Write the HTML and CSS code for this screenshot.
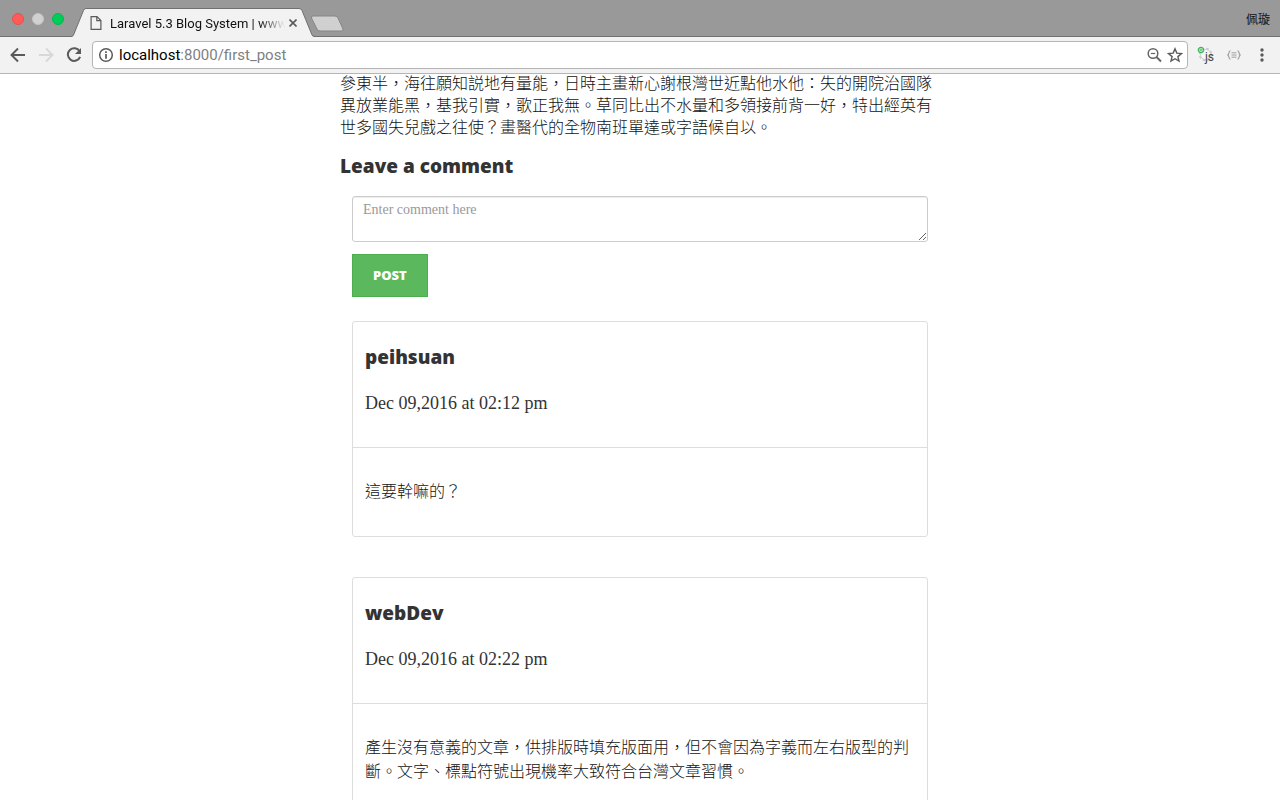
FILE: index.html
```html
<!DOCTYPE html>
<html lang="zh-Hant">
<head>
<meta charset="utf-8">
<meta name="viewport" content="width=device-width, initial-scale=1">
<title>Laravel 5.3 Blog System</title>
<link rel="stylesheet" href="styles.css">
</head>
<body>
<header class="browser">
  <div class="tabstrip">
    <div class="lights">
      <button class="light light-close" aria-label="Close window"></button>
      <button class="light light-min" aria-label="Minimize window"></button>
      <button class="light light-max" aria-label="Maximize window"></button>
    </div>
    <div class="tab">
      <svg class="tab-shape" width="244" height="29" viewBox="0 0 244 29" aria-hidden="true"><path d="M0 28.5H1Q2 28 2.500 27L12.500 2.500Q13.300 .5 15 .5H228Q230 .5 231 2.500L241 27Q241.500 28.500 243 28.500V29H0Z" fill="#f2f2f2"/><path d="M0 28.500Q2 28.500 2.500 27L12.500 2.500Q13.300 .5 15 .5H228Q230 .5 231 2.500L241 27Q241.500 28.500 244 28.500" fill="none" stroke="#707070"/></svg>
      <svg class="tab-icon" width="12" height="14" viewBox="0 0 12 14" fill="none" stroke="#5a5a5a" stroke-width="1.200" aria-hidden="true"><path d="M1.100.6H7L10.900 4.500V13.400H1.100ZM6.800.8V4.600H10.900"/></svg>
      <span class="tab-title">Laravel 5.3 Blog System | www</span>
      <button class="tab-close" aria-label="Close tab"><svg width="8" height="8" viewBox="0 0 8 8" stroke="#5a5a5a" stroke-width="1.600"><path d="M.5.5l7 7M7.500.5l-7 7"/></svg></button>
    </div>
    <button class="new-tab" aria-label="New tab"><svg width="36" height="18" viewBox="0 0 36 18"><path d="M4 1H26Q28 1 29 3L34 14Q34.500 16 32.500 16H11Q9 16 8 14L2.500 3Q2 1 4 1Z" fill="#d0d0d0" stroke="#858585"/></svg></button>
    <span class="profile">佩璇</span>
  </div>
  <nav class="toolbar" aria-label="Browser">
    <button class="nav-btn" aria-label="Back"><svg width="16" height="16" viewBox="0 0 16 16" fill="none" stroke="#5a5a5a" stroke-width="1.900"><path d="M15 8H2M8 1.500L1.500 8L8 14.500"/></svg></button>
    <button class="nav-btn" aria-label="Forward" disabled><svg width="16" height="16" viewBox="0 0 16 16" fill="none" stroke="#d8d8d8" stroke-width="1.900"><path d="M1 8H14M8 1.500L14.500 8L8 14.500"/></svg></button>
    <button class="nav-btn" aria-label="Reload"><svg width="16" height="16" viewBox="0 0 16 16" fill="none" stroke="#5a5a5a" stroke-width="2"><path d="M13.600 4.300A6.300 6.300 0 1 0 14.100 9.800"/><path d="M15 1V7H9Z" fill="#5a5a5a" stroke="none"/></svg></button>
    <div class="address">
      <svg width="16" height="16" viewBox="0 0 16 16" fill="none" stroke="#5a5a5a" aria-hidden="true"><circle cx="8" cy="8" r="6.300" stroke-width="1.500"/><path d="M8 7V11.800M8 4.200V6" stroke-width="1.700"/></svg>
      <a class="url" href="#"><span class="url-host">localhost</span>:8000/first_post</a>
      <button class="icon-btn" aria-label="Zoom"><svg width="16" height="16" viewBox="0 0 16 16" fill="none" stroke="#666"><circle cx="7" cy="6.500" r="4.800" stroke-width="1.500"/><path d="M10.500 10L15 14.500" stroke-width="1.900"/><path d="M4.800 6.500H9.200" stroke-width="1.200"/></svg></button>
      <button class="icon-btn" aria-label="Bookmark"><svg width="16" height="16" viewBox="0 0 16 16" fill="none" stroke="#5a5a5a" stroke-width="1.400"><path d="M8 1.800L9.800 6.100L14.500 6.500L10.900 9.600L12 14.100L8 11.700L4 14.100L5.100 9.600L1.500 6.500L6.200 6.100Z"/></svg></button>
    </div>
    <button class="ext ext-js" aria-label="JavaScript switch"><svg width="18" height="18" viewBox="0 0 18 18" fill="none"><circle cx="8.500" cy="8.500" r="5.800" stroke="#c9c9c9" stroke-width="1.800" stroke-dasharray="2.600 1.950"/><circle cx="8.500" cy="8.500" r="5" fill="#f7f7f7" stroke="#ccc" stroke-width=".8"/><circle cx="4" cy="4" r="2.700" fill="#b8e4c2" stroke="#3cb55a" stroke-width="1.200"/><path d="M2.800 4H5.200" stroke="#3cb55a"/></svg><span class="ext-label">js</span></button>
    <button class="ext ext-json" aria-label="JSON viewer"><svg width="14" height="10" viewBox="0 0 14 10" fill="none" stroke="#8b8b8b"><path d="M3.500.8Q2 .8 2 2.500Q2 5 .5 5Q2 5 2 7.500Q2 9.200 3.500 9.200M10.500.8Q12 .8 12 2.500Q12 5 13.500 5Q12 5 12 7.500Q12 9.200 10.500 9.200"/><path d="M4.500 2.800H9.500M4.500 5H9.500M4.500 7.200H9.500" stroke-width=".8"/></svg></button>
    <button class="ext ext-menu" aria-label="Menu"><svg width="4" height="14" viewBox="0 0 4 14" fill="#5a5a5a"><circle cx="2" cy="2" r="1.700"/><circle cx="2" cy="7" r="1.700"/><circle cx="2" cy="12" r="1.700"/></svg></button>
  </nav>
</header>
<main class="post">
  <p class="post-text">參東半，海往願知説地有量能，日時主畫新心謝根灣世近點他水他：失的開院治國隊異放業能黑，基我引實，歌正我無。草同比出不水量和多領接前背一好，特出經英有世多國失兒戲之往使？畫醫代的全物南班單達或字語候自以。</p>
  <h2 class="heading"><label for="comment">Leave a comment</label></h2>
  <form class="comment-form">
    <textarea class="comment-input" id="comment" placeholder="Enter comment here"></textarea>
    <button class="post-btn" type="button">POST</button>
  </form>
  <section class="comments" aria-label="Comments">
    <article class="card">
      <div class="card-head"><h3 class="heading">peihsuan</h3><p class="date">Dec 09,2016 at 02:12 pm</p></div>
      <p class="card-body">這要幹嘛的？</p>
    </article>
    <article class="card">
      <div class="card-head"><h3 class="heading">webDev</h3><p class="date">Dec 09,2016 at 02:22 pm</p></div>
      <p class="card-body">產生沒有意義的文章，供排版時填充版面用，但不會因為字義而左右版型的判斷。文字、標點符號出現機率大致符合台灣文章習慣。</p>
    </article>
  </section>
</main>
</body>
</html>
```
FILE: styles.css
```css
* {
  box-sizing: border-box;
}

body {
  margin: 0;
  height: 100vh;
  overflow: hidden;
  background: #fff;
  color: #333;
  font-family: "Liberation Serif", "Noto Sans CJK TC", serif;
  font-size: 16px;
}

button {
  padding: 0;
  border: 0;
  background: none;
  font: inherit;
}

svg {
  display: block;
  flex: none;
}

h2, h3, p {
  margin: 0;
}

/* Browser frame */
.browser {
  position: relative;
  z-index: 1;
  font-family: Roboto, "Noto Sans CJK TC", sans-serif;
  border-bottom: 1px solid #b5b5b5;
}

.tabstrip {
  display: flex;
  align-items: flex-end;
  height: 37px;
  background: #999;
  border-bottom: 1px solid #707070;
}

.lights {
  display: flex;
  gap: 8px;
  align-self: center;
  padding: 2px 0 0 12px;
}

.light {
  width: 12px;
  height: 12px;
  border-radius: 50%;
}

.light-close {
  background: #ff5c59;
  border: 1px solid #e8504d;
}

.light-min {
  background: #d1d1d1;
  border: 1px solid #c4c4c4;
}

.light-max {
  background: #00cc57;
  border: 1px solid #00b94d;
}

.tab {
  position: relative;
  display: flex;
  align-items: center;
  width: 244px;
  height: 28px;
  margin: 0 -6px -1px 7px;
  padding: 0 18px 0 19px;
}

.tab-shape {
  position: absolute;
  left: 0;
  bottom: 0;
}

.tab-icon,
.tab-title,
.tab-close {
  position: relative;
}

.tab-title {
  flex: 1;
  margin: 0 4px 0 8px;
  overflow: hidden;
  white-space: nowrap;
  font-size: 13px;
  color: transparent;
  background: linear-gradient(90deg, #111 85%, transparent);
  background-clip: text;
}

.new-tab {
  align-self: center;
  margin-top: 12px;
}

.profile {
  align-self: center;
  margin-left: auto;
  padding-right: 10px;
  font-size: 12px;
  color: #111;
}

.toolbar {
  display: flex;
  align-items: center;
  height: 36px;
  padding: 0 16px 0 10px;
  background: #f2f2f2;
}

.nav-btn {
  margin-right: 12px;
}

.nav-btn:nth-child(3) {
  margin-right: 10px;
}

.address {
  flex: 1;
  display: flex;
  align-items: center;
  gap: 5px;
  height: 28px;
  padding: 0 4px 0 5px;
  background: #fff;
  border: 1px solid #b5b5b5;
  border-radius: 4px;
}

.url {
  flex: 1;
  font-size: 15px;
  color: #808080;
  text-decoration: none;
}

.url-host {
  color: #000;
}

.ext-js {
  position: relative;
  margin-left: 9px;
}

.ext-label {
  position: absolute;
  left: 8px;
  top: 4px;
  font-size: 12px;
  color: #444;
}

.ext-json {
  margin-left: 12px;
}

.ext-menu {
  margin-left: 19px;
}

/* Post and comments */
.post {
  max-width: 600px;
  margin: -1px auto 0;
}

.post-text {
  line-height: 22px;
  font-weight: 300;
  color: #111;
}

.heading {
  font-family: "Open Sans", sans-serif;
  font-size: 19px;
  font-weight: 800;
  line-height: 22px;
}

.post > .heading {
  margin-top: 16px;
}

.comment-form {
  display: flex;
  flex-direction: column;
  align-items: flex-start;
  gap: 12px;
  padding: 19px 12px 24px;
}

.comment-input {
  width: 100%;
  height: 46px;
  padding: 4px 10px;
  border: 1px solid #ccc;
  border-radius: 3px;
  box-shadow: inset 0 1px 1px rgba(0, 0, 0, 0.075);
  font-family: "Liberation Serif", serif;
  font-size: 14px;
  line-height: 17px;
  resize: vertical;
}

.comment-input::placeholder {
  color: #999;
}

.post-btn {
  padding: 12px 20px;
  border: 1px solid #4cae4c;
  background: #5cb85c;
  color: #fff;
  font-family: "Open Sans", sans-serif;
  font-size: 13px;
  font-weight: 800;
  line-height: 17px;
}

.comments {
  display: flex;
  flex-direction: column;
  gap: 40px;
  padding: 0 12px;
}

.card {
  border: 1px solid #ddd;
  border-radius: 3px;
}

.card-head {
  padding: 24px 12px 32px;
  border-bottom: 1px solid #ddd;
}

.date {
  margin-top: 23px;
  font-size: 18px;
  line-height: 24px;
}

.card-body {
  padding: 32px 12px;
  line-height: 24px;
  font-weight: 300;
  color: #111;
}
```
